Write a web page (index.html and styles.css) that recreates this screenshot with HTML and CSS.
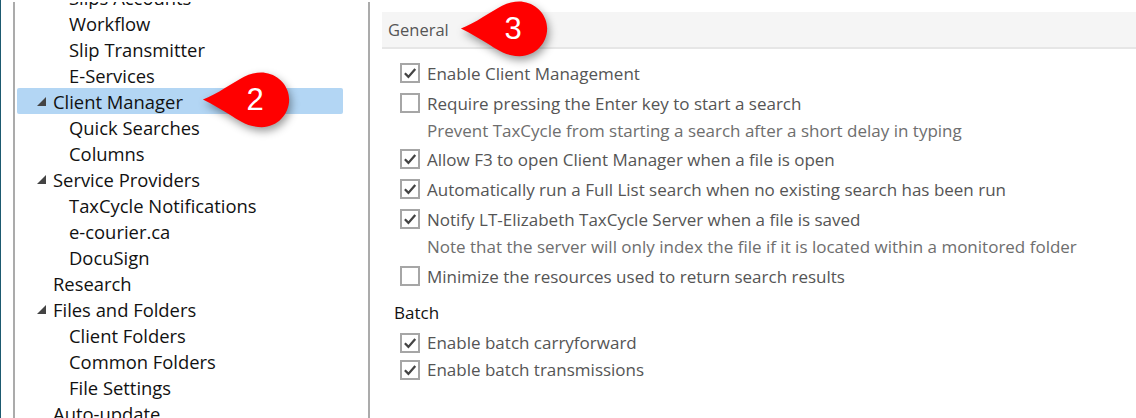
FILE: index.html
```html
<!DOCTYPE html>
<html lang="en">
<head>
  <meta charset="UTF-8" />
  <title>Options - Client Manager</title>
  <link rel="stylesheet" href="styles.css">
</head>
<body>
  <div class="window">
    <div class="edge"></div>

    <nav class="tree-pane">
      <ul class="tree">
        <li class="child">Slips Accounts</li>
        <li class="child">Workflow</li>
        <li class="child">Slip Transmitter</li>
        <li class="child">E-Services</li>
        <li class="parent selected"><span class="arrow"></span>Client Manager</li>
        <li class="child">Quick Searches</li>
        <li class="child">Columns</li>
        <li class="parent"><span class="arrow"></span>Service Providers</li>
        <li class="child">TaxCycle Notifications</li>
        <li class="child">e-courier.ca</li>
        <li class="child">DocuSign</li>
        <li class="parent">Research</li>
        <li class="parent"><span class="arrow"></span>Files and Folders</li>
        <li class="child">Client Folders</li>
        <li class="child">Common Folders</li>
        <li class="child">File Settings</li>
        <li class="parent">Auto-update</li>
      </ul>
    </nav>

    <main class="content">
      <h1 class="section-title">General</h1>
      <div class="options">
        <div class="option on">
          <span class="box"><svg viewBox="0 0 14 14"><path d="M2.5 7.2 5.6 10.4 11.6 3.4"/></svg></span>
          Enable Client Management
        </div>
        <div class="option">
          <span class="box"></span>
          Require pressing the Enter key to start a search
        </div>
        <p class="note">Prevent TaxCycle from starting a search after a short delay in typing</p>
        <div class="option on">
          <span class="box"><svg viewBox="0 0 14 14"><path d="M2.5 7.2 5.6 10.4 11.6 3.4"/></svg></span>
          Allow F3 to open Client Manager when a file is open
        </div>
        <div class="option on">
          <span class="box"><svg viewBox="0 0 14 14"><path d="M2.5 7.2 5.6 10.4 11.6 3.4"/></svg></span>
          Automatically run a Full List search when no existing search has been run
        </div>
        <div class="option on">
          <span class="box"><svg viewBox="0 0 14 14"><path d="M2.5 7.2 5.6 10.4 11.6 3.4"/></svg></span>
          Notify LT-Elizabeth TaxCycle Server when a file is saved
        </div>
        <p class="note">Note that the server will only index the file if it is located within a monitored folder</p>
        <div class="option last">
          <span class="box"></span>
          Minimize the resources used to return search results
        </div>
      </div>

      <h2 class="group-title">Batch</h2>
      <div class="options batch">
        <div class="option on">
          <span class="box"><svg viewBox="0 0 14 14"><path d="M2.5 7.2 5.6 10.4 11.6 3.4"/></svg></span>
          Enable batch carryforward
        </div>
        <div class="option on">
          <span class="box"><svg viewBox="0 0 14 14"><path d="M2.5 7.2 5.6 10.4 11.6 3.4"/></svg></span>
          Enable batch transmissions
        </div>
      </div>
    </main>

    <div class="callout callout-2">
      <svg viewBox="0 0 100 70" preserveAspectRatio="none"><path d="M4 32C18 27 36 14 46 9C54 5 62 4 68 5C82 7 92 19 92 32C92 47 80 60 64 60C50 60 42 54 34 49C24 43 14 37 4 32Z"/></svg>
      <span>2</span>
    </div>
    <div class="callout callout-3">
      <svg viewBox="0 0 100 70" preserveAspectRatio="none"><path d="M4 32C18 27 36 14 46 9C54 5 62 4 68 5C82 7 92 19 92 32C92 47 80 60 64 60C50 60 42 54 34 49C24 43 14 37 4 32Z"/></svg>
      <span>3</span>
    </div>
  </div>
</body>
</html>
```

FILE: styles.css
```css
* {
  box-sizing: border-box;
}
html, body {
  margin: 0;
  height: 100%;
  background: white;
  overflow: hidden;
}
body {
  font-family: 'Open Sans', 'Noto Sans', sans-serif;
  font-size: 17px;
  color: #111;
}
.window {
  position: relative;
  display: flex;
  height: 418px;
  padding-top: 2px;
}
.edge {
  width: 1px;
  margin-top: -2px;
  background: #1d5a70;
}
.tree-pane {
  width: 357px;
  margin-left: 12px;
  overflow: hidden;
  border-left: 2px solid #ababab;
  border-right: 2px solid #ababab;
  padding: 0 25px 0 2px;
  font-size: 18.4px;
}
.tree {
  list-style: none;
  margin: -18px 0 0;
  padding: 0;
}
.tree li {
  display: flex;
  align-items: center;
  height: 26px;
  white-space: nowrap;
}
.parent {
  padding-left: 36px;
  position: relative;
}
.child {
  padding-left: 52px;
}
.selected {
  background: #b3d6f4;
  border-radius: 2px;
}
.arrow {
  position: absolute;
  left: 20px;
  top: 9px;
  width: 0;
  height: 0;
  border-left: 9px solid transparent;
  border-bottom: 9px solid #444;
}
.content {
  flex: 1;
  padding: 10px 0 0 12px;
}
.section-title {
  margin: 0;
  height: 37px;
  padding-left: 6px;
  line-height: 35px;
  font-size: 16.5px;
  font-weight: normal;
  color: #555;
  background: #f5f5f5;
  border-bottom: 2px solid #e6e6e6;
}
.options {
  padding: 9px 0 0 18px;
  color: #555;
}
.option {
  display: flex;
  align-items: center;
  gap: 7px;
  height: 30px;
}
.option.last {
  margin-top: 1px;
}
.note {
  margin: -1px 0 0 27px;
  height: 27px;
  line-height: 27px;
  color: #6e6e6e;
}
.box {
  width: 20px;
  height: 20px;
  border: 2px solid #a6a6a6;
  display: flex;
  flex-shrink: 0;
  align-items: center;
  justify-content: center;
}
.box svg {
  width: 16px;
  height: 16px;
}
.box path {
  fill: none;
  stroke: #444;
  stroke-width: 2;
}
.group-title {
  margin: 7px 0 0 12px;
  height: 30px;
  line-height: 30px;
  font-size: 17px;
  font-weight: normal;
}
.batch {
  padding-top: 1px;
}
.batch .option {
  height: 27px;
}
.callout {
  position: absolute;
  width: 98px;
  height: 69px;
}
.callout svg {
  display: block;
  width: 100%;
  height: 100%;
  overflow: visible;
  filter: drop-shadow(2px 4px 4px rgba(0, 0, 0, 0.4));
}
.callout path {
  fill: #f00;
}
.callout span {
  position: absolute;
  left: 44px;
  top: 14px;
  width: 24px;
  text-align: center;
  font-family: 'Liberation Sans', sans-serif;
  font-size: 31px;
  line-height: 36px;
  color: white;
}
.callout-2 {
  left: 199px;
  top: 68px;
}
.callout-3 {
  left: 457px;
  top: -3px;
}
```
